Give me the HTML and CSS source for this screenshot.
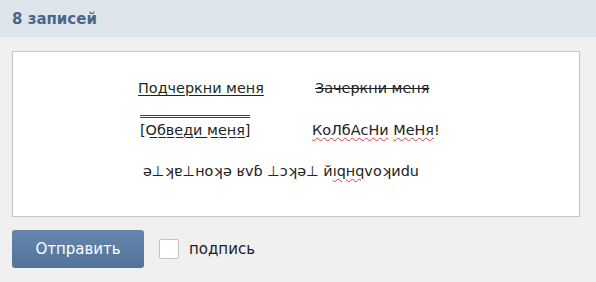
FILE: index.html
```html
<!DOCTYPE html>
<html lang="ru">
<head>
<meta charset="utf-8">
<link rel="stylesheet" href="styles.css">
</head>
<body>
<div class="header"><span class="title">8 записей</span></div>
<div class="main">
  <div class="editor">
    <div class="grid">
      <span class="under">Подчеркни меня</span>
      <span class="strike">Зачеркни меня</span>
      <span class="boxed"><span class="frame">[О̲б̲в̲е̲д̲и̲ ̲м̲е̲н̲я̲]</span></span>
      <span class="mixed"><span class="spell">КоЛбАсНи</span> <span class="spell">МеНя</span>!</span>
      <span class="flip">ǝ⊥ʞɐ⊥ноʞǝ ʁvɓ ⊥ɔʞǝ⊥ й<span class="spell">ıqнq</span>vоʞиdu</span>
    </div>
  </div>
  <div class="actions">
    <button class="send">Отправить</button>
    <span class="check"></span>
    <span class="label">подпись</span>
  </div>
</div>
</body>
</html>
```
FILE: styles.css
```css
html, body {
  margin: 0;
  padding: 0;
}
body {
  width: 596px;
  height: 282px;
  background: #f0f0f0;
  font-family: "DejaVu Sans", Verdana, sans-serif;
  overflow: hidden;
}
.header {
  height: 37px;
  background: #dee5ed;
  display: flex;
  align-items: center;
  padding-left: 12px;
}
.title {
  font-weight: bold;
  font-size: 15px;
  color: #4b6687;
}
.main {
  padding: 14px 16px 0 12px;
}
.editor {
  height: 166px;
  background: #fff;
  border: 1px solid #c6c6c6;
  padding-top: 15px;
  box-sizing: border-box;
}
.grid {
  display: grid;
  grid-template-columns: 177px auto;
  padding-left: 125px;
  font-size: 14.4px;
  color: #222;
  line-height: 42px;
}
.under {
  text-decoration: underline;
  text-underline-offset: 2px;
  color: #1a2a1a;
}
.strike {
  text-decoration: line-through;
}
.boxed {
  padding-left: 2px;
}
.frame {
  display: inline-block;
  line-height: 18px;
  border-top: 3px double #444;
  padding-top: 3px;
}
.mixed {
  margin-left: -3px;
}
.spell {
  text-decoration: underline wavy #d04050;
  text-decoration-thickness: 1px;
  text-underline-offset: 2px;
}
.flip {
  grid-column: 1 / -1;
  padding-left: 5px;
  line-height: 40px;
}
.actions {
  margin-top: 13px;
  display: flex;
  align-items: center;
}
.send {
  width: 132px;
  height: 38px;
  border: none;
  border-radius: 3px;
  background: linear-gradient(#6687ab, #52739a);
  color: #fff;
  font-family: "DejaVu Sans", Verdana, sans-serif;
  font-size: 15px;
  padding: 0;
}
.check {
  width: 18px;
  height: 18px;
  margin-left: 15px;
  border: 1px solid #c4c4c4;
  border-radius: 2px;
  background: #fff;
}
.label {
  margin-left: 10px;
  font-size: 15px;
  color: #222;
}
```
